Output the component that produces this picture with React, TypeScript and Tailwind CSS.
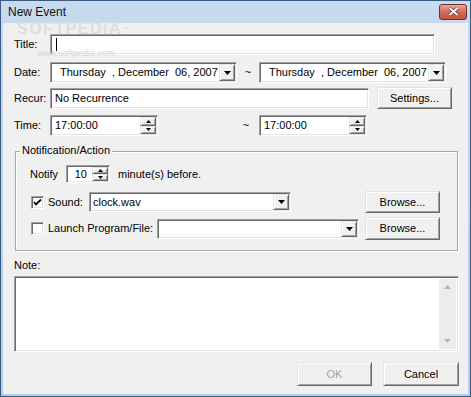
import React from 'react';

const font = "font-['Liberation_Sans',Arial,sans-serif]";
const sunken =
  'bg-white border border-t-[#a0a0a0] border-l-[#a0a0a0] border-r-white border-b-white shadow-[inset_1px_1px_0_#696969,inset_-1px_-1px_0_#e3e3e3]';
const raised =
  'bg-[#f0f0f0] border border-t-[#e3e3e3] border-l-[#e3e3e3] border-r-[#696969] border-b-[#696969] shadow-[inset_1px_1px_0_#ffffff,inset_-1px_-1px_0_#a0a0a0]';

const Arrow = ({ up = false, w = 7, h = 4, color = '#000' }: { up?: boolean; w?: number; h?: number; color?: string }) => (
  <svg width={w} height={h} viewBox={`0 0 ${w} ${h}`}>
    <polygon points={up ? `0,${h} ${w},${h} ${w / 2},0` : `0,0 ${w},0 ${w / 2},${h}`} fill={color} />
  </svg>
);

const DropBtn = () => (
  <div className={`${raised} w-[16px] shrink-0 flex items-center justify-center`}>
    <Arrow />
  </div>
);

const Spin = () => (
  <div className="w-[16px] shrink-0 flex flex-col">
    <div className={`${raised} flex-1 flex items-center justify-center`}>
      <Arrow up w={5} h={3} />
    </div>
    <div className={`${raised} flex-1 flex items-center justify-center`}>
      <Arrow w={5} h={3} />
    </div>
  </div>
);

const Combo = ({ text, width, pad = 8, h = 21 }: { text: string; width: number; pad?: number; h?: number }) => (
  <div className={`${sunken} flex p-px`} style={{ width, height: h }}>
    <div className="flex-1 flex items-center whitespace-pre" style={{ paddingLeft: pad }}>
      {text}
    </div>
    <DropBtn />
  </div>
);

const TimeBox = () => (
  <div className={`${sunken} w-[108px] h-[21px] flex p-px`}>
    <div className="flex-1 flex items-center pl-[3px]">17:00:00</div>
    <Spin />
  </div>
);

const Button = ({ label, w = 75, h = 22, disabled = false }: { label: string; w?: number; h?: number; disabled?: boolean }) => (
  <div
    className={`${raised} flex items-center justify-center ${disabled ? 'text-[#a0a0a0]' : 'text-black'}`}
    style={{ width: w, height: h }}
  >
    {label}
  </div>
);

const Check = ({ checked }: { checked: boolean }) => (
  <div className={`${sunken} w-[13px] h-[13px] flex items-center justify-center shrink-0`}>
    {checked && (
      <svg width="9" height="9" viewBox="0 0 9 9">
        <path d="M1 4 L3 6.5 L8 1.5" stroke="#000" strokeWidth="1.8" fill="none" />
      </svg>
    )}
  </div>
);

const Tilde = () => <div className="w-[22px] flex items-center justify-center">~</div>;

export default function App() {
  return (
    <div className={`${font} w-[471px] h-[397px] bg-[#3b5c82] p-px text-[11px] text-black select-none`}>
      <div className="h-full flex flex-col bg-gradient-to-b from-[#c7daee] to-[#b6cde6]">
        {/* title bar */}
        <div className="h-[22px] flex items-center pl-[7px] pr-[3px] shrink-0">
          <span className="text-[12px] text-[#111] flex-1">New Event</span>
          <div className="w-[28px] h-[16px] mb-[1px] rounded-[3px] border border-[#6e2f2f] bg-gradient-to-b from-[#eaa797] via-[#d36a57] to-[#c8523f] flex items-center justify-center">
            <svg width="11" height="9" viewBox="0 0 11 9">
              <path d="M1.5 1 L9.5 8 M9.5 1 L1.5 8" stroke="#5a2020" strokeWidth="3.2" />
              <path d="M1.5 1 L9.5 8 M9.5 1 L1.5 8" stroke="#fff" strokeWidth="2" />
            </svg>
          </div>
        </div>

        {/* client area */}
        <div className="relative flex-1 mx-[2px] mb-[2px] bg-[#f0f0f0] flex flex-col">
          {/* watermark */}
          <div className="absolute left-[14px] top-0 leading-[12px] text-[16px] font-bold tracking-[1.5px] text-[#dedede] pointer-events-none">
            SOFTPEDIA<span className="text-[6px] align-top">™</span>
          </div>

          {/* Title */}
          <div className="relative mt-[11px] h-[21px] flex items-center pl-[11px]">
            <span className="w-[36px] leading-[13px]">Title:</span>
            <div className={`${sunken} relative w-[385px] h-[21px] flex items-center pl-[5px]`}>
              <div className="w-px h-[13px] bg-black" />
              <div className="absolute left-[-14px] bottom-[-3px] leading-[8px] text-[9px] text-[#d6d6d6] pointer-events-none">
                www.softpedia.com
              </div>
            </div>
          </div>

          {/* Date */}
          <div className="mt-[7px] h-[21px] flex items-center pl-[11px]">
            <span className="w-[36px]">Date:</span>
            <Combo text="Thursday  , December  06, 2007" width={187} />
            <Tilde />
            <Combo text="Thursday  , December  06, 2007" width={187} />
          </div>

          {/* Recur */}
          <div className="mt-[4px] h-[22px] flex items-center pl-[11px]">
            <span className="w-[36px]">Recur:</span>
            <div className={`${sunken} w-[319px] h-[21px] flex items-center pl-[4px]`}>No Recurrence</div>
            <div className="ml-[8px]">
              <Button label="Settings..." />
            </div>
          </div>

          {/* Time */}
          <div className="mt-[6px] h-[21px] flex items-center pl-[11px]">
            <span className="w-[36px]">Time:</span>
            <TimeBox />
            <div className="w-[77px]" />
            <Tilde />
            <div className="w-[2px]" />
            <TimeBox />
          </div>

          {/* Notification group */}
          <div className="relative mt-[15px] ml-[12px] w-[443px] h-[100px] border border-[#a8a8a8] shadow-[inset_1px_1px_0_#ffffff,1px_1px_0_#ffffff] flex flex-col">
            <div className="absolute left-[4px] -top-[8px] px-[2px] bg-[#f0f0f0] leading-[13px]">Notification/Action</div>

            <div className="mt-[13px] h-[18px] flex items-center pl-[14px]">
              <span className="w-[36px]">Notify</span>
              <div className={`${sunken} w-[44px] h-[18px] flex p-px`}>
                <div className="flex-1 flex items-center justify-end pr-[5px]">10</div>
                <Spin />
              </div>
              <span className="ml-[8px]">minute(s) before.</span>
            </div>

            <div className="mt-[8px] h-[22px] flex items-center pl-[15px]">
              <div className="w-[58px] flex items-center">
                <Check checked />
                <span className="ml-[4px]">Sound:</span>
              </div>
              <Combo text="clock.wav" width={202} pad={2} h={20} />
              <div className="ml-[74px]">
                <Button label="Browse..." />
              </div>
            </div>

            <div className="mt-[4px] h-[23px] flex items-center pl-[15px]">
              <div className="w-[126px] flex items-center">
                <Check checked={false} />
                <span className="ml-[4px]">Launch Program/File:</span>
              </div>
              <Combo text="" width={202} pad={2} h={20} />
              <div className="ml-[6px]">
                <Button label="Browse..." h={23} />
              </div>
            </div>
          </div>

          {/* Note */}
          <div className="mt-[8px] h-[13px] flex items-center pl-[11px]">Note:</div>
          <div className={`${sunken} mt-[4px] ml-[11px] w-[445px] h-[76px] flex justify-end p-[2px]`}>
            <div className="w-[17px] h-full bg-[#ececec] flex flex-col items-center justify-between py-[6px]">
              <Arrow up w={7} h={4} color="#b4b4b4" />
              <Arrow w={7} h={4} color="#b4b4b4" />
            </div>
          </div>

          {/* buttons */}
          <div className="mt-[10px] flex pl-[294px]">
            <Button label="OK" w={75} h={24} disabled />
            <div className="ml-[11px]">
              <Button label="Cancel" w={76} h={24} />
            </div>
          </div>
        </div>
      </div>
    </div>
  );
}
